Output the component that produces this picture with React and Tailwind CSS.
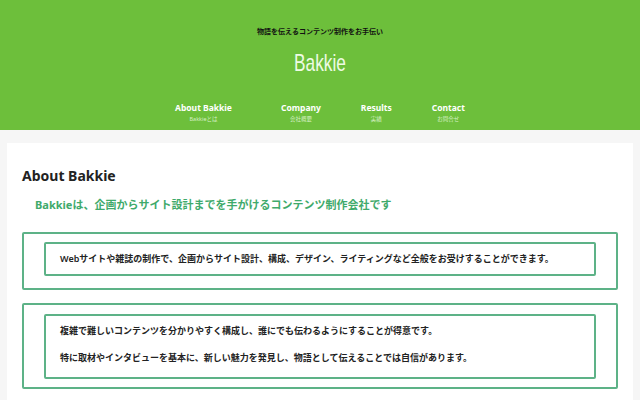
import React from 'react';

const NAV = [
    { en: 'About Bakkie', ja: 'Bakkieとは', cls: 'pl-[20px] pr-[29px]' },
    { en: 'Company', ja: '会社概要', cls: 'px-[20px]' },
    { en: 'Results', ja: '実績', cls: 'px-[20px]' },
    { en: 'Contact', ja: 'お問合せ', cls: 'px-[20px]' },
];

const jp = { fontFamily: '"Noto Sans", "Noto Sans CJK JP", sans-serif' };

export default function App() {
    return (
        <div className="w-[640px] h-[400px] overflow-hidden bg-[#f6f6f6]" style={jp}>
            {/* header */}
            <header className="h-[130px] bg-[#6dbf3b] flex flex-col items-center">
                <div className="mt-[27px] text-[7px] leading-[10px] font-bold text-[#111]">物語を伝えるコンテンツ制作をお手伝い</div>
                <div className="mt-[13px] h-[26px] flex justify-center">
                    <span className="inline-block scale-x-[0.72] text-[24px] leading-[26px] text-[#eefbe4]"
                        style={{ fontFamily: '"Liberation Sans", Arial, sans-serif' }}>Bakkie</span>
                </div>
                <nav className="mt-[26px] flex justify-center">
                    {NAV.map((n) => (
                        <div key={n.en} className={`${n.cls} flex flex-col items-center`}>
                            <span className="text-[8.5px] leading-[12px] font-bold text-white">{n.en}</span>
                            <span className="mt-[1px] text-[5.5px] leading-[8px] text-[#d6efc6]">{n.ja}</span>
                        </div>
                    ))}
                </nav>
            </header>

            {/* content */}
            <main className="mx-[7px] mt-[13px] bg-white h-[300px] px-[15px] pt-[24px]">
                <h2 className="text-[14px] leading-[18px] font-bold text-[#222]">About Bakkie</h2>
                <p className="mt-[13px] ml-[13px] text-[11px] leading-[14px] font-bold text-[#3faa6b]">Bakkieは、企画からサイト設計までを手がけるコンテンツ制作会社です</p>

                <div className="mt-[20px] border-2 border-[#5db287] rounded-[2px] px-[20px] pt-[8px] pb-[12px]">
                    <div className="border-2 border-[#5db287] rounded-[2px] px-[14px] py-[8px]">
                        <p className="text-[9px] leading-[14px] font-semibold text-[#222]">Webサイトや雑誌の制作で、企画からサイト設計、構成、デザイン、ライティングなど全般をお受けすることができます。</p>
                    </div>
                </div>

                <div className="mt-[13px] border-2 border-[#5db287] rounded-[2px] px-[20px] pt-[9px] pb-[8px]">
                    <div className="border-2 border-[#5db287] rounded-[2px] px-[14px] pt-[8px] pb-[12px] flex flex-col gap-[13px]">
                        <p className="text-[9px] leading-[14px] font-semibold text-[#222]">複雑で難しいコンテンツを分かりやすく構成し、誰にでも伝わるようにすることが得意です。</p>
                        <p className="text-[9px] leading-[14px] font-semibold text-[#222]">特に取材やインタビューを基本に、新しい魅力を発見し、物語として伝えることでは自信があります。</p>
                    </div>
                </div>
            </main>
        </div>
    );
}
